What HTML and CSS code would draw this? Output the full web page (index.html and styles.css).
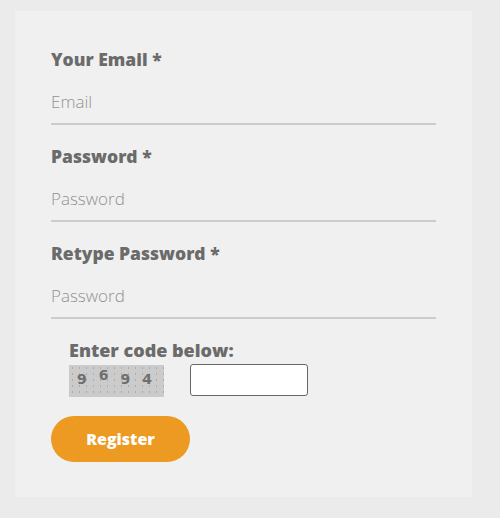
FILE: index.html
```html
<!DOCTYPE html>
<html>
<head>
<meta charset="utf-8">
<link rel="stylesheet" href="styles.css">
</head>
<body>
<div class="panel">
  <form class="form">
    <div class="group">
      <label class="label">Your Email *</label>
      <input class="field" type="text" placeholder="Email">
    </div>
    <div class="group">
      <label class="label">Password *</label>
      <input class="field" type="password" placeholder="Password">
    </div>
    <div class="group">
      <label class="label">Retype Password *</label>
      <input class="field" type="password" placeholder="Password">
    </div>
    <div class="captcha">
      <div class="captcha-label">Enter code below:</div>
      <div class="captcha-row">
        <div class="captcha-img"><span class="d">9</span><span class="d up">6</span><span class="d">9</span><span class="d">4</span></div>
        <input class="captcha-input" type="text">
      </div>
    </div>
    <button class="btn" type="button">Register</button>
  </form>
</div>
</body>
</html>
```
FILE: styles.css
```css
html, body { margin: 0; padding: 0; }
body {
  background: #ebebeb;
  width: 500px;
  height: 518px;
  overflow: hidden;
  font-family: "Open Sans", sans-serif;
}
.panel {
  margin: 11px 0 0 15px;
  width: 457px;
  height: 486px;
  background: #f0f0f0;
  box-sizing: border-box;
  padding: 38px 0 0 36px;
}
.form { display: flex; flex-direction: column; align-items: flex-start; }
.group { display: flex; flex-direction: column; margin-bottom: 21px; }
.label {
  font-family: "Open Sans", sans-serif;
  font-weight: 800;
  font-size: 17.5px;
  line-height: 20px;
  color: #6b6b6b;
  margin-bottom: 8px;
}
.field {
  width: 385px;
  height: 48px;
  box-sizing: border-box;
  border: 0;
  border-bottom: 2px solid #cccccc;
  background: transparent;
  padding: 3px 0 0 0;
  font-family: "Open Sans", sans-serif;
  font-weight: 300;
  font-size: 17px;
  color: #999;
  outline: none;
}
.field::placeholder { color: #929292; opacity: 1; }
.captcha { padding-left: 18px; display: flex; flex-direction: column; }
.captcha-label {
  font-family: "Open Sans", sans-serif;
  font-weight: 800;
  font-size: 18px;
  line-height: 20px;
  color: #6b6b6b;
  margin-bottom: 4px;
}
.captcha-row { display: flex; align-items: flex-start; gap: 26px; }
.captcha-img {
  margin-top: 1px;
  width: 95px;
  height: 32px;
  background-color: #cbcbcb;
  background-image: radial-gradient(circle, #acacac 0.6px, transparent 0.9px);
  background-size: 7px 6px;
  box-sizing: border-box;
  padding: 6px 0 0 8px;
  display: flex;
  gap: 12px;
  font-family: "DejaVu Sans", sans-serif;
  font-weight: bold;
  font-size: 14px;
  color: #6f6f6f;
}
.d { display: inline-block; }
.up { transform: translateY(-4px); }
.captcha-input {
  width: 118px;
  height: 32px;
  box-sizing: border-box;
  border: 1px solid #666;
  border-radius: 3px;
  background: #fff;
  margin: 0;
}
.btn {
  margin-top: 19px;
  width: 139px;
  height: 46px;
  border: 0;
  border-radius: 23px;
  background: #ec9a22;
  color: #fff;
  font-family: "Open Sans", sans-serif;
  font-weight: 800;
  font-size: 16px;
  padding: 0;
}
```
